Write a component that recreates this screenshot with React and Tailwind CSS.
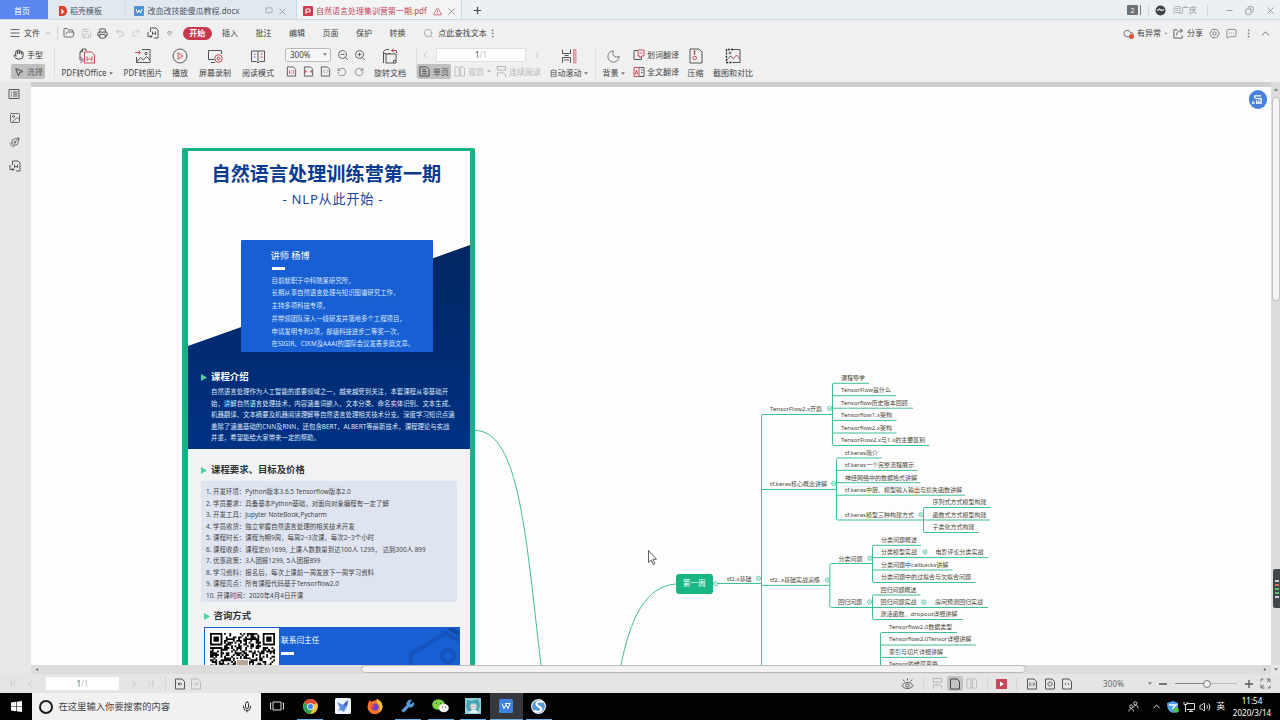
import React from "react";
import {
  Menu, ChevronDown, ChevronUp, ChevronLeft, ChevronRight, FolderOpen, Save, Printer, Undo2, Redo2,
  Search, MoreVertical, Cloud, MessageSquareMore, Minus, Plus, X, Copy, Hand, MousePointer2,
  ZoomIn, ZoomOut, RotateCcw, RotateCw, Moon, Mic, Wrench, Volume2, TriangleAlert,
  ChevronFirst, ChevronLast, PenTool, Image as ImageIcon,
} from "lucide-react";

/* ---------- small drawings ---------- */

const RED = "#cc4a5c";
const INK = "#555555";

function Ico({ children, className = "size-[16px]", vb = "0 0 16 16", stroke = INK, sw = 1 }) {
  return (
    <svg viewBox={vb} className={`${className} shrink-0`} fill="none" stroke={stroke} strokeWidth={sw}>
      {children}
    </svg>
  );
}

const OfficeIcon = () => (
  <Ico>
    <path d="M7 3.500V1H3.500L1 4v8h2M1 4h2.500V1" />
    <path d="M1.500 9l3 3-3 3" />
    <path d="M5.500 15V4h7l3 3v8z" stroke={RED} />
    <path d="M8 8.500v4l2.500-2 2.500 2v-4" stroke={RED} />
  </Ico>
);
const PictureIcon = () => (
  <Ico>
    <path d="M7 1.500h8v13H1.500V9" />
    <path d="M1.500 14l4-4.500 3 2.500 3-3.500 3.500 3.500" />
    <circle cx="11" cy="5.500" r="1.200" />
    <path d="M0 4.500h5M3.500 2.500l2 2-2 2" stroke={RED} />
  </Ico>
);
const PlayIcon = () => (
  <Ico>
    <circle cx="8" cy="8" r="7" />
    <path d="M6 4.800v6.400L11 8z" stroke={RED} />
  </Ico>
);
const RecordIcon = () => (
  <Ico>
    <path d="M14.500 6V2.500h-13v9h6M4 14.500h4" />
    <circle cx="11.500" cy="10.500" r="3.800" stroke={RED} />
    <circle cx="11.500" cy="10.500" r="1.500" stroke={RED} />
  </Ico>
);
const ReadIcon = () => (
  <Ico>
    <path d="M8 3v10.500M8 3H1.500v10.500H6.500L8 15l1.500-1.500h5V3z" />
    <path d="M3.500 6h2M3.500 9h2" stroke="#5f86c4" />
    <path d="M10.500 6h2M10.500 9h2" stroke={RED} />
  </Ico>
);
const RotateDocIcon = () => (
  <Ico>
    <path d="M6 5.500l2.500 0M1.500 15V3.500L4 1.500h3M1.500 5.500h3M4 6h10v9H4z" />
    <path d="M14.500 5V2.500h-5M11.500 0.500l-2 2 2 2" stroke={RED} />
    <path d="M11.500 15v-2.500H14" />
  </Ico>
);
const AutoScrollIcon = () => (
  <Ico>
    <path d="M1.500 1.500v4h8v-4M1.500 15V9.500h8V15M3.500 7.500h4M3 12h5" />
    <path d="M12.500 1.500h2.500V15h-2.500z" fill="#e9a9b1" stroke="#dc8f9a" />
  </Ico>
);
const CompressIcon = () => (
  <Ico>
    <path d="M2 1h9l3 3v11H2z" />
    <path d="M6.500 2v5M5.500 3.500h2M5.500 5.500h2" stroke={RED} />
    <circle cx="6.700" cy="10" r="1.800" stroke={RED} />
  </Ico>
);
const CompareIcon = () => (
  <Ico>
    <path d="M8 1.500H1.500v13H8" strokeDasharray="2 1.200" stroke="#222" strokeWidth="1.300" />
    <path d="M8 1.500h7v13H8" />
    <path d="M1.500 12l4-4 3 3" />
    <path d="M8 11l3.500-4 3.500 4" stroke={RED} />
    <circle cx="5" cy="5" r="1" />
  </Ico>
);
const TranslateWord = () => (
  <Ico className="size-[12px]" vb="0 0 12 12">
    <path d="M5 1.500H1v9h7.500V8" />
    <path d="M5 1h6v6H8.500L7 8.500V7H5z" stroke={RED} />
    <path d="M6.500 4h3" stroke={RED} />
  </Ico>
);
const TranslateAll = () => (
  <Ico className="size-[12px]" vb="0 0 12 12">
    <path d="M6 1.500h5v9H6M8 4h1.500M8 6.500h1.500" />
    <path d="M1 1.500h5v9H1zM2.300 8.500L3.500 4l1.200 4.500" stroke={RED} />
  </Ico>
);
const PageIcon = ({ stroke = INK, inner, innerStroke = RED, className = "size-[12px]" }) => (
  <Ico className={className} vb="0 0 12 12" stroke={stroke}>
    <path d="M1.500 1h6.500l2.500 2.500V11h-9z" />
    <path d={inner} stroke={innerStroke} />
  </Ico>
);
const SinglePage = () => (
  <Ico className="size-[11px]" vb="0 0 12 12">
    <path d="M1 1h7.500L11 3.500V11H1zM3.500 4h4M3.500 6.200h5M3.500 8.500h5" stroke="#444" />
  </Ico>
);
const DoublePage = ({ stroke = "#b9b9b9" }) => (
  <Ico className="size-[11px]" vb="0 0 12 12" stroke={stroke}>
    <path d="M1 1h3l1.500 1.500V11H1zM7 1h3l1.500 1.500V11H7z" />
  </Ico>
);
const Continuous = ({ stroke = "#b0b0b0" }) => (
  <Ico className="size-[11px]" vb="0 0 12 12" stroke={stroke}>
    <path d="M1.500 0.500v4h9v-4zM1.500 12V7.500h7l2 2V12" />
  </Ico>
);
const DocConvert = ({ stroke = INK }) => (
  <Ico className="size-[12px]" vb="0 0 12 12" stroke={stroke}>
    <path d="M3.500 5V1H9l2 2v8H7" />
    <path d="M5.500 4.500v3L7 6.300l1.500 1.200v-3M1 5v4.500h4M3.500 8l1.500 1.500L3.500 11" />
  </Ico>
);
const Tri = ({ className = "" }) => (
  <svg viewBox="0 0 6 4" className={`w-[4px] h-[3px] shrink-0 ${className}`}>
    <path d="M0 0h6L3 4z" fill="#777" />
  </svg>
);

/* ---------- window chrome ---------- */

function Tabs() {
  return (
    <div className="flex h-[20px] shrink-0 border-b border-[#c9d8e2] bg-[#ebf0f2] text-[8px] leading-none text-[#4c5560]">
      <div className="flex w-[48px] items-center justify-center bg-[#5a86f0] pb-px pt-[3px] text-white">
        <span className="-ml-1">首页</span>
      </div>
      <div className="flex w-[78px] items-center border-r border-[#d3dce6] bg-[#e1e8f0] pl-[9px] pt-[3px]">
        <svg viewBox="0 0 10 10" className="size-[10px]">
          <path d="M2 0h4a4 5 0 0 1 0 10H2z" fill="#d9402e" />
          <path d="M5 3v4l2-2" stroke="#fff" strokeWidth="1.200" fill="none" />
        </svg>
        <span className="ml-[3px]">稻壳模板</span>
      </div>
      <div className="flex w-[170px] items-center bg-[#e1e8f0] pl-[8px] pt-[3px]">
        <svg viewBox="0 0 10 10" className="size-[10px]">
          <rect width="10" height="10" rx="1" fill="#4f92dc" />
          <path d="M2 3l1.500 4L5 4l1.500 3L8 3" stroke="#fff" fill="none" />
        </svg>
        <span className="ml-[3.500px] w-[94.500px] whitespace-nowrap">改血改技能傻瓜教程.docx</span>
        <svg viewBox="0 0 9 9" className="ml-[23px] size-[8px]" fill="none" stroke="#a3abb5">
          <path d="M1 1h7v5H5l-1 2-1-2H1z" />
        </svg>
        <X className="ml-[4px] size-[11px] text-[#8b939c]" strokeWidth={1.8} />
      </div>
      <div className="flex w-[166px] items-center border-x border-[#c9d8e2] bg-[#f3f4f5] pl-[6px] pt-[3px] text-[#c4485a]">
        <svg viewBox="0 0 10 10" className="size-[10px]">
          <rect width="10" height="10" rx="1" fill="#cf3c50" />
          <path d="M3 8V3h4v3H3" stroke="#fff" fill="none" />
        </svg>
        <span className="ml-[3px] w-[112px] whitespace-nowrap">自然语言处理集训营第一期.pdf</span>
        <TriangleAlert className="ml-[5px] size-[9px]" strokeWidth={2} />
        <X className="ml-[4px] size-[11px] text-[#858585]" strokeWidth={1.8} />
      </div>
      <Plus className="ml-[10px] mt-[5px] size-[11px] text-[#444]" strokeWidth={2.6} />
      <div className="ml-auto flex items-center pt-px text-[#777]">
        <div className="flex h-[10px] w-[11px] items-center justify-center rounded-[1px] bg-[#6d7174] text-[7px] text-white">2</div>
        <div className="ml-[2px] h-[10px] w-px bg-[#777]" />
        <div className="ml-[7px] h-[13px] w-px bg-[#d4d9dc]" />
        <svg viewBox="0 0 12 12" className="ml-[6px] size-[11px]">
          <circle cx="6" cy="6" r="5.500" fill="#3c4147" />
          <path d="M2 6l3-1.500L7 6l3-1" stroke="#dfe4e8" strokeWidth="1.500" fill="none" />
        </svg>
        <span className="ml-[7px] text-[#85898c]">闫广庆</span>
        <div className="ml-[10px] h-[13px] w-px bg-[#d4d9dc]" />
        <Minus className="ml-[17px] size-[9px]" strokeWidth={1.8} />
        <Copy className="ml-[11px] size-[9px] -scale-x-100" strokeWidth={1.8} />
        <X className="ml-[11px] mr-[4px] size-[11px]" strokeWidth={1.5} />
      </div>
    </div>
  );
}

const iconCell = "flex w-[16.75px] items-center justify-center";
const menuCell = "flex w-[33.5px] items-center justify-center";

function MenuRow() {
  return (
    <div className="flex h-[26px] shrink-0 items-center text-[8px] leading-none text-[#444]">
      <Menu className="ml-[9px] size-[12px] text-[#555]" strokeWidth={1.8} />
      <span className="ml-[3px]">文件</span>
      <ChevronDown className="ml-[4px] size-[8px] text-[#999]" strokeWidth={2} />
      <div className="ml-[5px] mr-[3px] h-[15px] w-px bg-[#d5d5d5]" />
      <div className={iconCell}><FolderOpen className="size-[12px] text-[#555]" strokeWidth={1.7} /></div>
      <div className={iconCell}><Save className="size-[11px] text-[#bbb]" strokeWidth={1.7} /></div>
      <div className={iconCell}><Printer className="size-[11px] text-[#444]" strokeWidth={2} /></div>
      <div className={iconCell}><Undo2 className="size-[10px] text-[#bbb]" strokeWidth={2} /></div>
      <div className={iconCell}><Redo2 className="size-[10px] text-[#c9c9c9]" strokeWidth={2} /></div>
      <div className={iconCell}><DocConvert /></div>
      <div className={iconCell}>
        <svg viewBox="0 0 6 6" className="size-[5px]" fill="none" stroke="#888"><path d="M1 1h4v2L3 5 1 3z" /></svg>
      </div>
      <div className="ml-[4.500px] flex h-[13px] w-[29px] items-center justify-center rounded-full bg-[#c8384d] font-bold text-white">开始</div>
      <div className="ml-[1.500px] flex">
        <div className={menuCell}>插入</div>
        <div className={menuCell}>批注</div>
        <div className={menuCell}>编辑</div>
        <div className={menuCell}>页面</div>
        <div className={menuCell}>保护</div>
        <div className={menuCell}>转换</div>
      </div>
      <Search className="ml-[9px] size-[11px] text-[#999]" strokeWidth={1.7} />
      <span className="ml-[4px] tracking-[0.1px]">点此查找文本</span>
      <MoreVertical className="size-[11px] text-[#777]" />
      <div className="ml-auto flex items-center">
        <div className="relative">
          <Cloud className="size-[11px] text-[#555]" strokeWidth={1.8} />
          <div className="absolute bottom-0 right-0 size-[5px] rounded-full bg-[#e2553d]" />
        </div>
        <span className="ml-[3px]">有异常</span>
        <Tri className="ml-[3px] scale-75" />
        <svg viewBox="0 0 12 12" className="ml-[5px] size-[11px]" fill="none" stroke="#555">
          <path d="M5 2H1v9h9V8M4 8c0-4 2-5 6-5M8 1l2.500 2L8 5" />
        </svg>
        <span className="ml-[3px]">分享</span>
        <svg viewBox="0 0 12 12" className="ml-[6px] size-[11px]" fill="none" stroke="#777">
          <path d="M3.500 1.500h5L11.200 6 8.500 10.500h-5L.8 6z" strokeLinejoin="round" />
          <circle cx="6" cy="6" r="1.900" />
        </svg>
        <MessageSquareMore className="ml-[6px] size-[11px] text-[#777]" strokeWidth={1.7} />
        <MoreVertical className="ml-[6px] size-[11px] text-[#777]" />
        <ChevronUp className="ml-[5px] mr-[8px] size-[13px] text-[#666]" strokeWidth={1.7} />
      </div>
    </div>
  );
}

function Tool({ icon, label, className, arrow }) {
  return (
    <div className={`flex shrink-0 flex-col items-center ${className}`}>
      <div className="flex h-[18px] items-center pt-[2px]">{icon}</div>
      <div className="mt-[2px] flex h-[14px] items-center whitespace-nowrap">
        {label}
        {arrow && <Tri className="ml-[2px]" />}
      </div>
    </div>
  );
}

const smallCell = "flex w-[16.8px] items-center justify-center";

function Toolbar() {
  return (
    <div className="flex h-[36px] shrink-0 text-[8px] leading-none text-[#444]">
      <div className="flex w-[54px] flex-col pl-[11px]">
        <div className="flex h-[17px] items-center gap-[3px] pl-[2px]">
          <Hand className="size-[11px] text-[#333]" strokeWidth={2} />
          <span className="text-[#333]">手型</span>
        </div>
        <div className="mt-[1px] flex h-[15px] w-[34px] items-center gap-[3px] rounded-[2px] bg-[#bfbfbf] pl-[3px] text-[#666]">
          <MousePointer2 className="size-[10px] text-[#333]" strokeWidth={2} />
          <span>选择</span>
        </div>
      </div>
      <div className="mt-[2px] h-[30px] w-px bg-[#dedede]" />
      <Tool className="w-[64px]" icon={<OfficeIcon />} label="PDF转Office" arrow />
      <Tool className="w-[48px]" icon={<PictureIcon />} label="PDF转图片" />
      <Tool className="w-[26px]" icon={<PlayIcon />} label="播放" />
      <Tool className="w-[44px]" icon={<RecordIcon />} label="屏幕录制" />
      <Tool className="w-[42px]" icon={<ReadIcon />} label="阅读模式" />
      <div className="ml-[4px] w-[86px]">
        <div className="flex h-[17px] items-center">
          <div className="ml-[2px] flex h-[14px] w-[46px] items-center justify-between rounded-[2px] border border-[#bbb] bg-[#f6f6f6] pl-[4px] pr-[3px] text-[8px]">
            300%<Tri />
          </div>
          <ZoomOut className="ml-[6px] size-[12px] text-[#555]" strokeWidth={1.7} />
          <ZoomIn className="ml-[5px] size-[12px] text-[#555]" strokeWidth={1.7} />
        </div>
        <div className="mt-[1px] flex h-[15px] items-center pl-[0.5px]">
          <div className={smallCell}><PageIcon className="size-[11px]" inner="M4 4.500v4M6 5v.5M6 7.500v.5M8 4.500v4" /></div>
          <div className={smallCell}><PageIcon className="size-[11px]" inner="M2 6h2M8 6h2M3 4.500v3M9 4.500v3" /></div>
          <div className={smallCell}><PageIcon className="size-[11px]" inner="M5 4.500L3.500 6 5 7.500M7 4.500L8.500 6 7 7.500" innerStroke="#888" /></div>
          <div className={smallCell}><RotateCcw className="size-[10px] text-[#777]" strokeWidth={1.8} /></div>
          <div className={smallCell}><RotateCw className="size-[10px] text-[#777]" strokeWidth={1.8} /></div>
        </div>
      </div>
      <Tool className="w-[42px]" icon={<RotateDocIcon />} label="旋转文档" />
      <div className="ml-[5px] mt-[2px] h-[30px] w-px bg-[#dedede]" />
      <div className="w-[132px]">
        <div className="flex h-[17px] items-center">
          <ChevronLeft className="ml-[3px] size-[10px] text-[#bbb]" strokeWidth={2} />
          <div className="ml-[6px] flex h-[14px] w-[90px] items-center justify-center border border-[#e0e0e0] bg-white text-[8px] text-[#555]">
            1<span className="text-[#bbb]">/1</span>
          </div>
          <ChevronRight className="ml-[6px] size-[10px] text-[#bbb]" strokeWidth={2} />
        </div>
        <div className="mt-[1px] flex h-[15px] items-center text-[#b5b5b5]">
          <div className="flex h-[15px] w-[34px] items-center gap-[3px] rounded-[2px] bg-[#bfbfbf] pl-[2px] text-[#555]">
            <SinglePage />
            <span>单页</span>
          </div>
          <div className="ml-[3px] flex items-center gap-[3px]"><DoublePage />双页<Tri className="opacity-50" /></div>
          <div className="ml-[5px] flex items-center gap-[2px]"><Continuous />连续阅读</div>
        </div>
      </div>
      <Tool className="w-[39px]" icon={<AutoScrollIcon />} label="自动滚动" arrow />
      <div className="ml-[7px] mt-[2px] h-[30px] w-px bg-[#dedede]" />
      <Tool className="w-[35px]" icon={<Moon className="size-[15px] text-[#666]" strokeWidth={1.4} />} label="背景" arrow />
      <div className="ml-[2px] w-[48px]">
        <div className="flex h-[17px] items-center gap-[2px]"><TranslateWord />划词翻译</div>
        <div className="mt-[1px] flex h-[15px] items-center gap-[2px]"><TranslateAll />全文翻译</div>
      </div>
      <Tool className="w-[29px]" icon={<CompressIcon />} label="压缩" />
      <Tool className="w-[46px]" icon={<CompareIcon />} label="截图和对比" />
    </div>
  );
}

/* ---------- poster ---------- */

const bio = [
  "目前就职于中科院某研究所，",
  "长期从事自然语言处理与知识图谱研究工作，",
  "主持多项科技专项，",
  "并带领团队深入一线研发并落地多个工程项目，",
  "申请发明专利2项，部级科技进步二等奖一次，",
  "在SIGIR、CIKM及AAAI的国际会议发表多篇文章。",
];
const intro = [
  "自然语言处理作为人工智能的重要领域之一，越来越受到关注，本套课程从零基础开",
  "始，讲解自然语言处理技术，内容涵盖词嵌入、文本分类、命名实体识别、文本生成、",
  "机器翻译、文本摘要及机器阅读理解等自然语言处理相关技术分支。深度学习知识点涵",
  "盖除了涵盖基础的CNN及RNN，还包含BERT，ALBERT等最新技术，课程理论与实战",
  "并重，希望能给大家带来一定的帮助。",
];
const terms = [
  "1. 开发环境：Python版本3.6.5 Tensorflow版本2.0",
  "2. 学员要求：具备基本Python基础，对面向对象编程有一定了解",
  "3. 开发工具：Jupyter NoteBook,Pycharm",
  "4. 学员收货：独立掌握自然语言处理的相关技术开发",
  "5. 课程时长：课程为期9周，每周2~3次课，每次2~3个小时",
  "6. 课程收费：课程定价1699, 上课人数数量到达100人 1299， 达到300人 899",
  "7. 优惠政策：3人团报1299, 5人团报899",
  "8. 学习资料：报名后，每次上课前一周发放下一周学习资料",
  "9. 课程亮点：所有课程代码基于Tensorflow2.0",
  "10. 开课时间：2020年4月4日开课",
];

const N = 37;
function qrModules() {
  const cells = [];
  let seed = 20200314;
  const finder = (x, y, ox, oy) => {
    const a = x - ox, b = y - oy;
    if (a < -1 || b < -1 || a > 7 || b > 7) return null;
    if (a < 0 || b < 0 || a > 6 || b > 6) return false;
    return a === 0 || b === 0 || a === 6 || b === 6 || (a > 1 && a < 5 && b > 1 && b < 5);
  };
  for (let y = 0; y < N; y++) {
    for (let x = 0; x < N; x++) {
      seed = (seed * 1103515245 + 12345) % 2147483648;
      const f = finder(x, y, 0, 0) ?? finder(x, y, N - 7, 0) ?? finder(x, y, 0, N - 7);
      const on = f === null ? seed / 2147483648 > 0.5 : f;
      if (on) cells.push(`M${x} ${y}h1.050v1.050h-1.050z`);
    }
  }
  return cells.join("");
}
const QR = qrModules();

const Bullet = () => (
  <svg viewBox="0 0 6 7" className="h-[7px] w-[6px] shrink-0">
    <path d="M0 0l6 3.500L0 7z" fill="#4cd0a4" />
  </svg>
);

function Poster() {
  return (
    <div className="absolute left-[151px] top-[61px] h-[700px] w-[293px] overflow-hidden rounded-[2px] border-x-[6px] border-t-[3px] border-[#18b086] border-r-[5px] bg-[#f1f2f4]">
      <div className="relative flex h-[298px] flex-col bg-[#fdfdfd]">
        <div className="absolute inset-0 bg-linear-to-b from-[#022660] from-30% to-[#003184] [clip-path:polygon(0_195px,100%_94px,100%_100%,0_100%)]" />
        <div className="relative mt-[10px] h-[26px] whitespace-nowrap pl-[23.500px] text-[19.150px] font-bold leading-[26px] text-[#0b3b91]">自然语言处理训练营第一期</div>
        <div className="relative mt-[2px] h-[20px] whitespace-nowrap pl-[94.500px] text-[13.200px] leading-[20px] tracking-[0.700px] text-[#1d4796]">- NLP从此开始 -</div>
        <div className="relative ml-[52.500px] mt-[30.500px] h-[112px] w-[192.500px] shrink-0 rounded-[1px] bg-[#175fd3] pl-[30px] pt-[8.500px] text-white">
          <div className="h-[16px] text-[9.200px] leading-[16px]">讲师 杨博</div>
          <div className="ml-[1px] mt-[3px] h-[2.500px] w-[13px] bg-white" />
          <div className="ml-[1px] mt-[5px] text-[6.400px] leading-[12.750px] text-[#dce8fb]">
            {bio.map((t) => <div key={t} className="whitespace-nowrap">{t}</div>)}
          </div>
        </div>
        <div className="relative mt-[18px] flex h-[16px] items-center gap-[4px] pl-[13px] text-[9.400px] font-bold text-white"><Bullet />课程介绍</div>
        <div className="relative mt-[0.500px] pl-[23px] text-[6.420px] leading-[11.600px] text-[#dfe7f5]">
          {intro.map((t) => <div key={t} className="whitespace-nowrap">{t}</div>)}
        </div>
      </div>
      <div className="mt-[12.500px] flex h-[17px] items-center gap-[4px] pl-[13px] text-[9.400px] font-bold text-[#333]"><Bullet />课程要求、目标及价格</div>
      <div className="ml-[13px] mt-[2.500px] h-[121px] w-[256px] bg-[#dfe5f0] pl-[5px] pt-[5px] text-[6.450px] leading-[11.530px] text-[#444]">
        {terms.map((t) => <div key={t} className="whitespace-nowrap">{t}</div>)}
      </div>
      <div className="mt-[6.500px] flex h-[16px] items-center gap-[3.500px] pl-[16px] text-[9.400px] font-bold text-[#333]"><Bullet />咨询方式</div>
      <div className="relative ml-[16px] mt-[2.500px] flex h-[100px] w-[256px] overflow-hidden border border-[#1e5fc4] bg-[#175fd3]">
        <div className="relative h-full w-[74px] bg-white pl-[5px] pt-[5px]">
          <svg viewBox={`0 0 ${N} ${N}`} className="size-[65px]"><path d={QR} fill="#0a0a0a" /></svg>
          <div className="absolute left-[31px] top-[31px] size-[13px] border border-white bg-[#b9a797]" />
        </div>
        <div className="pl-[2px] pt-[6px]">
          <div className="whitespace-nowrap text-[7.700px] leading-[13px] text-white">联系闫主任</div>
          <div className="mt-[5px] h-[2.500px] w-[13px] bg-white" />
        </div>
        <svg viewBox="0 0 60 40" className="absolute right-0 top-0 h-[40px] w-[60px]" fill="none" stroke="#1653bd" strokeWidth="4">
          <path d="M12 42V26L46 5 62 14" />
          <path d="M50 0l12 7" stroke="#1549a6" />
          <circle cx="49" cy="28" r="6" />
        </svg>
      </div>
    </div>
  );
}

/* ---------- mind map: [text, x, centre y] ---------- */

const nodes = [
  ["课程导学", 841, 378], ["TensorFlow是什么", 841, 390.3], ["Tensorflow历史版本回顾", 841, 402.7],
  ["Tensorflow1.x架构", 841, 415.2], ["Tensorflow2.x架构", 841, 427.6], ["TensorFlow2.x与1.x的主要区别", 841, 440],
  ["TensorFlow2.x开篇", 770, 408.7],
  ["tf.keras简介", 845, 452.5], ["tf.keras一个完整流程展示", 845, 465], ["神经网络中的数据格式讲解", 845, 477.5],
  ["tf.keras中层、模型输入输出与损失函数讲解", 845, 490], ["tf.keras模型三种构建方式", 845, 514.7],
  ["tf.keras核心概念讲解", 770, 483.5],
  ["序列式方式模型构建", 932.5, 502.3], ["函数式方式模型构建", 932.5, 514.8], ["子类化方式构建", 932.5, 527.2],
  ["tf2.x基础", 727, 578.5], ["tf2..x基础实战演练", 770, 580],
  ["分类问题", 838.5, 558.5], ["分类问题概述", 881, 540], ["分类模型实战", 881, 552.3], ["电影评论分类实战", 935.5, 552.3],
  ["分类问题中callbacks讲解", 881, 564.6], ["分类问题中的过拟合与欠拟合问题", 881, 577],
  ["回归问题", 838, 602], ["回归问题概述", 880.5, 589.7], ["回归问题实战", 880.5, 602], ["房间预测回归实战", 935, 602],
  ["激活函数、dropout详细讲解", 880.5, 614.3],
  ["Tensorflow2.0数据类型", 889, 627], ["Tensorflow2.0Tensor详细讲解", 889, 639.3],
  ["索引与切片详细讲解", 889, 651.8], ["Tensor的维度变换", 889, 664.2],
];
const links = [
  "M761.500 665V416q0-1.500 1.500-1.500H832.500",
  "M869 383.300H834q-1.500 0-1.500 1.500V444q0 1.500 1.500 1.500H929.500",
  "M832.500 395.700H896M832.500 408.200H913M832.500 420.600H896.500M832.500 433H896.500",
  "M761.500 489.500H836.500M882 458H838q-1.500 0-1.500 1.500V518.500q0 1.500 1.500 1.500H990",
  "M836.500 470.400H917.500M836.500 482.700H920.500M836.500 495.200H965",
  "M991 507.500H925q-1.500 0-1.500 1.500V531q0 1.500 1.500 1.500H978.500",
  "M712 583.500H761.500M761.500 585.400H829.800",
  "M872.500 563.500H831.300q-1.500 0-1.500 1.500V606q0 1.500 1.500 1.500H988",
  "M921 545.300H874q-1.500 0-1.500 1.500V581q0 1.500 1.500 1.500H975.500M872.500 557.600H988M872.500 570H952.500",
  "M920.500 595H874q-1.500 0-1.500 1.500V618q0 1.500 1.500 1.500H962.500",
  "M957 632.500H882q-1.500 0-1.500 1.500V665M880.500 645H976M880.500 657.400H947",
  "M475 430.500C520 430.500 526 540 541 665",
  "M676 584C645 586 630 620 621 665",
];
const joints = [
  [829.7, 408.5], [833.7, 483.5], [921, 514.7], [715.5, 583.7], [758.5, 578.3], [827.3, 580],
  [870, 558.2], [925, 552], [869.5, 602], [923.8, 602],
];
const OX = 31;
const OY = 87;

function MindMap() {
  return (
    <>
      <svg viewBox="31 87 1240 578" className="absolute left-0 top-0 h-[578px] w-[1240px]" fill="none" stroke="#3fbf98">
        {links.map((d) => <path key={d} d={d} />)}
        {joints.map(([x, y]) => (
          <g key={`${x}-${y}`} strokeWidth="0.800">
            <circle cx={x} cy={y} r="2.100" fill="#fdfdfd" />
            <path d={`M${x - 1} ${y}h2`} />
          </g>
        ))}
      </svg>
      {nodes.map(([t, x, y]) => (
        <div
          key={t + y}
          className="absolute whitespace-nowrap text-[6px] leading-[8px] text-[#4b4733]"
          style={{ left: x - OX, top: y - OY - 4 }}
        >
          {t}
        </div>
      ))}
      <div className="absolute left-[645px] top-[487px] flex h-[19.500px] w-[36.500px] items-center justify-center rounded-[3px] bg-[#18b585] text-[7.700px] text-white">
        第一周
      </div>
      <svg viewBox="0 0 9 16" className="absolute left-[617px] top-[463px] h-[16px] w-[9px]">
        <path d="M.5.5v12l2.800-2.600 2 4.600 1.700-.8-2-4.400H8.500z" fill="#fff" stroke="#333" strokeWidth="0.800" />
      </svg>
    </>
  );
}

function Workspace() {
  return (
    <div className="flex h-[583px] shrink-0">
      <div className="flex w-[31px] shrink-0 flex-col items-center bg-[#e8e8e8]">
        <div className="flex h-[24px] w-full items-center justify-center pr-[3px]">
          <Ico className="size-[12px]" vb="0 0 12 12"><path d="M1 1.500h10v9H1zM3 4h1M5 4h4.500M3 6h1M5 6h4.500M3 8h1M5 8h4.500" /></Ico>
        </div>
        <div className="flex h-[24px] w-full items-center justify-center pr-[2px]"><ImageIcon className="size-[12px] text-[#555]" strokeWidth={1.7} /></div>
        <div className="flex h-[24px] w-full items-center justify-center pr-[2px]"><PenTool className="size-[11px] rotate-90 text-[#555]" strokeWidth={1.7} /></div>
        <div className="flex h-[24px] w-full items-center justify-center pr-[2px]"><DocConvert /></div>
      </div>
      <div className="flex w-[1240px] shrink-0 flex-col">
        <div className="h-[5px] shrink-0 bg-[#cfcfcf]" />
        <div className="relative h-[578px] overflow-hidden bg-[#fdfdfd]">
          <MindMap />
          <Poster />
          <div className="absolute left-[1217.500px] top-[3px] flex size-[18.500px] items-center justify-center rounded-full bg-[#4681dc]">
            <svg viewBox="0 0 12 12" className="size-[11px]" fill="none" stroke="#fff" strokeWidth="1.400">
              <path d="M3 5V2h7M4 5h6v5H5V7M7.500 7v3M1 8v2h2" />
            </svg>
          </div>
        </div>
      </div>
      <div className="relative flex w-[9px] shrink-0 flex-col items-center bg-[#dcdcdc] pt-[6px]">
        <Tri className="rotate-180" />
        <div className="mt-[6px] h-[204px] w-[8px] rounded-[3px] border border-[#c0c0c0] bg-[#f3f3f3]" />
        <div className="absolute right-0 top-[487px] flex h-[39px] w-[7px] flex-col items-center justify-center gap-[2px] rounded-l-[2px] bg-[#3f464c]">
          <div className="h-[2px] w-[4px] bg-[#cfd4d8]" />
          <div className="h-[2px] w-[4px] bg-[#d8705a]" />
          <div className="h-[2px] w-[4px] bg-[#56c06c]" />
          <div className="h-[2px] w-[4px] bg-[#56c06c]" />
          <div className="h-[2px] w-[4px] bg-[#cfd4d8]" />
        </div>
      </div>
    </div>
  );
}

function HScroll() {
  return (
    <div className="flex h-[8.500px] shrink-0 bg-[#e8e8e8]">
      <div className="ml-[31px] flex w-[1240px] items-center bg-[#dcdcdc] px-[4px]">
        <Tri className="rotate-90" />
        <div className="ml-[322px] h-[8px] w-[665px] rounded-[4px] border border-[#bcbcbc] bg-[#f2f2f2]" />
        <Tri className="ml-auto -rotate-90" />
      </div>
      <div className="flex flex-1 items-center justify-center"><Tri /></div>
    </div>
  );
}

function StatusBar() {
  return (
    <div className="flex h-[19.500px] shrink-0 items-center bg-[#e5e5e5] pb-px pt-[2px] text-[8px] leading-none text-[#666]">
      <ChevronFirst className="ml-[8px] size-[11px] text-[#bdbdbd]" strokeWidth={1.7} />
      <ChevronLeft className="ml-[6px] size-[10px] text-[#bdbdbd]" strokeWidth={1.7} />
      <div className="ml-[11px] flex h-[13px] w-[73px] items-center justify-center bg-white text-[#3f6f7f]">1<span className="text-[#bbb]">/1</span></div>
      <ChevronRight className="ml-[10px] size-[10px] text-[#aaa]" strokeWidth={1.7} />
      <ChevronLast className="ml-[6px] size-[11px] text-[#bdbdbd]" strokeWidth={1.7} />
      <div className="ml-[9px] h-[14px] w-px bg-[#d2d2d2]" />
      <PageIcon className="ml-[8px] size-[12px]" inner="M4 6h4M5.500 4.500L4 6l1.500 1.500" innerStroke="#555" />
      <PageIcon className="ml-[4px] size-[12px]" stroke="#b9b9b9" inner="M4 6h4M6.500 4.500L8 6 6.500 7.500" innerStroke="#b9b9b9" />
      <div className="ml-auto flex items-center">
        <svg viewBox="0 0 13 12" className="h-[12px] w-[13px]" fill="none" stroke="#555">
          <path d="M1 7.500c2.500-4 8.500-4 11 0-2.500 4-8.500 4-11 0zM6.500 2.500V0.500M3.500 3.500L2 1.500M9.500 3.500L11 1.500" />
          <circle cx="6.500" cy="7.500" r="1.600" />
        </svg>
        <div className="ml-[9px] h-[12px] w-px bg-[#d2d2d2]" />
        <div className="ml-[8px] flex"><Continuous /></div>
        <div className="ml-[4px] flex h-[15px] w-[16px] items-center justify-center rounded-[2px] bg-[#c2c2c2]">
          <PageIcon className="size-[12px]" stroke="#444" inner="" />
        </div>
        <div className="ml-[3px] flex"><DoublePage /></div>
        <div className="ml-[10px] h-[12px] w-px bg-[#d2d2d2]" />
        <svg viewBox="0 0 11 10" className="ml-[8px] h-[10px] w-[11px]">
          <rect width="11" height="10" fill="#c8465a" />
          <path d="M4 2.500v5L8 5z" fill="#fff" />
        </svg>
        <div className="ml-[9px] h-[12px] w-px bg-[#d2d2d2]" />
        <PageIcon className="ml-[9px] size-[12px]" inner="M4 4.500v3.500M6 5v.5M6 7v.5M8 4.500v3.500" innerStroke="#555" />
        <PageIcon className="ml-[6px] size-[12px]" inner="M6 3.500L8.500 6 6 8.500 3.500 6z" innerStroke="#555" />
        <PageIcon className="ml-[5px] size-[12px]" inner="M4.500 5v2M7.500 5v2" innerStroke="#777" />
        <span className="ml-[30px] w-[24px] tracking-[0.200px]">300%</span>
        <Tri className="ml-[21px]" />
        <div className="ml-[7px] h-[2px] w-[8px] bg-[#777]" />
        <div className="ml-[8px] flex w-[62px] items-center">
          <div className="h-px w-[28px] bg-[#888]" />
          <div className="size-[8px] rounded-full border border-[#777] bg-[#f3f3f3]" />
          <div className="h-px flex-1 bg-[#bbb]" />
        </div>
        <Plus className="ml-[6px] size-[12px] text-[#555]" strokeWidth={2.7} />
        <svg viewBox="0 0 11 11" className="ml-[5px] mr-[9px] size-[11px]" fill="none" stroke="#666">
          <path d="M6.500 1H10v3.500M10 1L7 4M4.500 10H1V6.500M1 10l3-3M1 3.500V1h2.500M10 7.500V10H7.500" />
        </svg>
      </div>
    </div>
  );
}

/* ---------- taskbar ---------- */

function TaskCell({ children, active, open }) {
  return (
    <div className={`flex w-[32.700px] shrink-0 flex-col items-center ${active ? "bg-[#35383d]" : ""}`}>
      <div className="flex flex-1 items-center justify-center">{children}</div>
      <div className={`h-px ${active ? "w-full" : "w-[26px]"} ${open ? "bg-[#6cb0e8]" : ""}`} />
    </div>
  );
}

function Taskbar() {
  return (
    <div className="flex h-[27px] shrink-0 bg-[#030303] text-white">
      <div className="flex w-[32px] items-center justify-center">
        <svg viewBox="0 0 11 11" className="size-[11px]" fill="#fff">
          <path d="M0 1.500l5-.7v4.400H0zM5.600.7L11 0v5.200H5.600zM0 5.800h5v4.400l-5-.7zM5.600 5.800H11V11l-5.400-.8z" />
        </svg>
      </div>
      <div className="flex w-[229px] items-center bg-[#f1f1f1] text-[#444]">
        <div className="ml-[6.500px] size-[14px] rounded-full border-2 border-[#1c1c1c]" />
        <span className="ml-[6px] whitespace-nowrap text-[9.300px] leading-none">在这里输入你要搜索的内容</span>
        <Mic className="ml-auto mr-[8px] size-[12px] text-[#333]" strokeWidth={2} />
      </div>
      <TaskCell>
        <svg viewBox="0 0 14 10" className="h-[10px] w-[14px]" fill="none" stroke="#ddd">
          <path d="M3 1h8v8H3zM1.500 2H.5v6h1M12.500 2h1v6h-1" />
        </svg>
      </TaskCell>
      <TaskCell open>
        <svg viewBox="0 0 16 16" className="size-[15px]">
          <circle cx="8" cy="8" r="8" fill="#f4c63a" />
          <path d="M8 8L1.100 4a8 8 0 0 1 13.800 0z" fill="#dd4b3e" />
          <path d="M8 8L1.100 4A8 8 0 0 0 7.500 16l3.500-6z" fill="#2fa35a" />
          <circle cx="8" cy="8" r="3.600" fill="#fff" />
          <circle cx="8" cy="8" r="2.800" fill="#4686e8" />
        </svg>
      </TaskCell>
      <TaskCell>
        <svg viewBox="0 0 16 16" className="size-[16px]">
          <rect width="16" height="16" rx="1.500" fill="#eef3fc" />
          <path d="M2 4l6 3 5-5-1 6-3 6-3-2-3 1 2-3z" fill="#5d8fe6" />
          <path d="M8 7l5-5-1 6z" fill="#3561c4" />
        </svg>
      </TaskCell>
      <TaskCell>
        <svg viewBox="0 0 16 16" className="size-[16px]">
          <path d="M1 6l1.500-4 2 2C7 2 9 3 10 .8c3 1.700 5.500 4 5.500 7.700A7.500 7.500 0 0 1 .5 9z" fill="#f7732b" />
          <path d="M10 1c3 2 5.500 4 5.500 7.500 0 3-2 5-4 6 3-4 1-8-1.500-9.500z" fill="#fbc93a" />
          <circle cx="8" cy="9" r="3.500" fill="#7143c4" />
          <path d="M3 7c2-1 4 0 5 1l-3 2z" fill="#f5503a" />
        </svg>
      </TaskCell>
      <TaskCell open><Wrench className="size-[14px] fill-[#5aa0dc] text-[#5aa0dc]" strokeWidth={1.5} /></TaskCell>
      <TaskCell open>
        <svg viewBox="0 0 17 14" className="h-[14px] w-[17px]">
          <ellipse cx="6.500" cy="5.500" rx="6.300" ry="5.300" fill="#7ed347" />
          <ellipse cx="11.800" cy="9" rx="5" ry="4.200" fill="#f1f1f1" />
          <path d="M4 4.300h1M8 4.300h1M10 8h1M13 8h1" stroke="#333" />
        </svg>
      </TaskCell>
      <TaskCell open>
        <svg viewBox="0 0 16 16" className="size-[16px]">
          <rect width="16" height="16" fill="#8fd0d8" />
          <path d="M2 2l5 1 6-2 2 6-2 6H3L1 8z" fill="#4aa3b3" />
          <circle cx="8.500" cy="8.500" r="3.200" fill="#f1e4e2" />
          <path d="M5 7c1-3 6-3 7 0l-2-1-1 1-1-1z" fill="#6cc3d0" />
          <path d="M4 14l3-2h4l3 3H4z" fill="#e7f2f4" />
          <path d="M6.500 8.800h1M9.500 8.800h1" stroke="#2d5f77" />
        </svg>
      </TaskCell>
      <TaskCell active open>
        <svg viewBox="0 0 14 14" className="size-[14px]">
          <rect width="14" height="14" rx="1.500" fill="#3d83de" />
          <path d="M3 4.500l2 5 2-4 2 4 2-5H6" stroke="#fff" fill="none" />
        </svg>
      </TaskCell>
      <TaskCell open>
        <svg viewBox="0 0 16 16" className="size-[15px]">
          <circle cx="8" cy="8" r="8" fill="#e9f1f9" />
          <circle cx="8" cy="8" r="6.800" fill="#5795d4" />
          <path d="M12.500 3.500C9 1.500 5 3.500 6 6s6 2.500 5 5.500-5 2.500-7.500 1" stroke="#fff" strokeWidth="2.200" fill="none" />
        </svg>
      </TaskCell>
      <div className="ml-auto flex items-center pr-[8px]">
        <svg viewBox="0 0 12 12" className="size-[11px]" fill="none" stroke="#ddd">
          <circle cx="3.500" cy="6" r="1.700" /><path d="M1 11.500c0-4 5-4 5 0" />
          <circle cx="8" cy="2.500" r="1.700" /><path d="M6 7c.5-3 5-3 5 1" />
        </svg>
        <ChevronUp className="ml-[12.500px] size-[11px]" strokeWidth={2} />
        <svg viewBox="0 0 12 12" className="ml-[5px] size-[12px]">
          <path d="M0 2l6-2 5 2v4c0 3-2 5-5 6-4-1-6-4-6-10z" fill="#4f9fe8" />
          <path d="M2 4h7L5 8" stroke="#fff" strokeWidth="1.300" fill="none" />
          <circle cx="9" cy="9" r="2.800" fill="#58c04b" />
        </svg>
        <svg viewBox="0 0 12 12" className="ml-[4px] size-[12px]" fill="none" stroke="#ddd">
          <path d="M4 2.500h7.500v6H4M6 10.500h4M8 8.500v2M1 1v2.500h3V1M2.500 3.500V11" />
        </svg>
        <Volume2 className="ml-[4px] size-[12px]" strokeWidth={1.7} />
        <span className="ml-[5px] text-[8.500px] leading-none">英</span>
        <div className="ml-[7px] w-[40px] text-center text-[8px] leading-[12.500px] tracking-[0.050px]">
          <div className="mt-[1px]">11:54</div>
          <div>2020/3/14</div>
        </div>
      </div>
    </div>
  );
}

export default function App() {
  return (
    <div className="flex h-[720px] w-[1280px] flex-col overflow-hidden bg-[#f0f0f0] font-['Noto_Sans','Noto_Sans_CJK_SC',sans-serif]">
      <Tabs />
      <MenuRow />
      <Toolbar />
      <Workspace />
      <HScroll />
      <StatusBar />
      <Taskbar />
    </div>
  );
}
